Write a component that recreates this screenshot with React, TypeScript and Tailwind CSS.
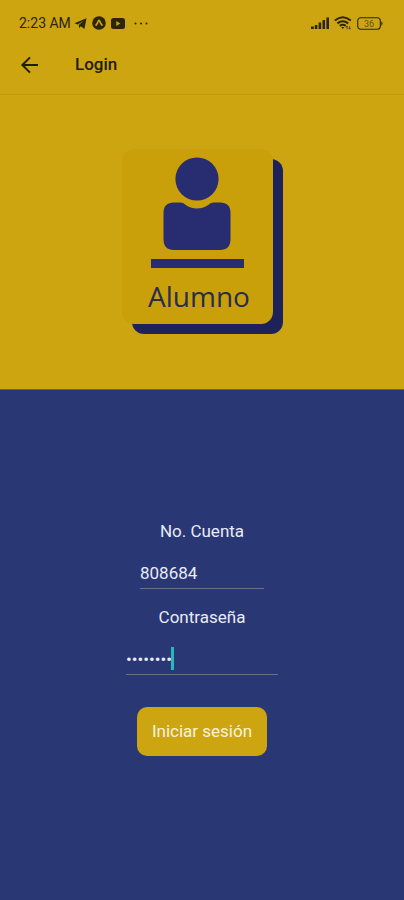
import { useState } from 'react';

function StatusBar() {
  return (
    <div className="flex h-9 items-end justify-between pr-5 pl-[19px] text-[#2b260a]">
      <div className="flex h-[26px] items-center gap-[5px]">
        <span className="text-sm">2:23 AM</span>
        <svg className="-ml-[2px] h-[13px] w-[13px]" viewBox="0 0 13 13" fill="currentColor" aria-hidden="true">
          <path d="M0.5 6.2 12.5 1.2 10.4 12 6.8 9.2 5.2 11.2 4.7 8 9.8 3.8 3.6 7.4Z" />
        </svg>
        <svg className="h-[14px] w-[14px]" viewBox="0 0 14 14" aria-hidden="true">
          <circle cx="7" cy="7" r="6.8" fill="currentColor" />
          <path d="M3.6 9.6Q5.6 7.4 6.2 5.2Q7 3.4 7.8 5.2Q8.4 7.4 10.4 9.6" fill="none" stroke="#cda510" strokeWidth="1.6" />
        </svg>
        <svg className="h-[11px] w-[14px]" viewBox="0 0 14 11" aria-hidden="true">
          <rect width="14" height="11" rx="2.5" fill="currentColor" />
          <path d="M5.3 3 9.3 5.5 5.3 8Z" fill="#cda510" />
        </svg>
        <svg className="ml-1 h-[3px] w-[14px]" viewBox="0 0 14 3" fill="currentColor" aria-hidden="true">
          <circle cx="1.5" cy="1.5" r="1" />
          <circle cx="7" cy="1.5" r="1" />
          <circle cx="12.5" cy="1.5" r="1" />
        </svg>
      </div>
      <div className="flex h-[26px] items-center gap-[5px]">
        <svg className="h-3 w-[18px]" viewBox="0 0 18 12" fill="currentColor" aria-hidden="true">
          <rect x="0" y="9.5" width="2.8" height="2.5" />
          <rect x="3.8" y="8" width="2.6" height="4" />
          <rect x="7.6" y="5.5" width="2.6" height="6.5" />
          <rect x="11.5" y="3" width="2.6" height="9" />
          <rect x="15.4" y="0.5" width="2.6" height="11.5" />
        </svg>
        <svg className="h-[14px] w-[18px]" viewBox="0 0 18 14" fill="none" stroke="currentColor" strokeWidth="2" aria-hidden="true">
          <path d="M0.8 4.6Q8.8 -2.2 16.8 4.6M3.4 7.4Q8.8 3 14.2 7.4M5.8 9.9Q8.8 7.6 11.8 9.9" />
          <path d="M7.2 10.9 8.8 13 10.4 10.9Z" fill="currentColor" stroke="none" />
          <path d="M13 10.2v3M15.6 13.2v-3M12.2 11.2 13 10.2 13.8 11.2M14.8 12.2 15.6 13.2 16.4 12.2" strokeWidth="0.7" />
        </svg>
        <svg className="h-[13px] w-[27px]" viewBox="0 0 27 13" aria-hidden="true">
          <rect x="0.7" y="0.7" width="22.6" height="11.6" rx="3" fill="none" stroke="currentColor" strokeWidth="1.1" />
          <path d="M24.3 4Q26.8 6.5 24.3 9Z" fill="currentColor" />
          <text x="12" y="9.8" textAnchor="middle" fontSize="9" fill="currentColor" opacity="0.65">36</text>
        </svg>
      </div>
    </div>
  );
}

function AlumnoCard() {
  return (
    <div className="mr-[10px] mb-[10px] flex w-[151px] flex-col items-center rounded-xl bg-[#caa00a] pt-2 pb-1 shadow-[10px_10px_0_#1d235a]">
      <svg className="h-[94px] w-[68px]" viewBox="0 0 68 94" fill="#272d70" aria-hidden="true">
        <circle cx="34" cy="22" r="21.6" />
        <path d="M11 45.5H17C19.5 45.5 20.5 46.2 22 47.4A20 20 0 0 0 46 47.4C47.5 46.2 48.5 45.5 51 45.5H57Q67.5 45.5 67.5 56V82Q67.5 93 57 93H11Q0.5 93 0.5 82V56Q0.5 45.5 11 45.5Z" />
      </svg>
      <div className="mt-2 h-[9px] w-[93px] bg-[#272d70]" />
      <p className="mt-2 pb-1 pl-1 font-['Open_Sans','Noto_Sans',sans-serif] text-[28px] leading-10 text-[#272d50]">
        Alumno
      </p>
    </div>
  );
}

export default function App() {
  const [account, setAccount] = useState('808684');
  const [password, setPassword] = useState('12345678');
  const [focused, setFocused] = useState(false);

  return (
    <div className="flex min-h-screen flex-col bg-[#293775] font-[Roboto,sans-serif]">
      <header className="border-b border-[#c49b0c] bg-[#cda510] shadow-[0_1px_2px_#c49b0c]">
        <StatusBar />
        <div className="flex h-[58px] items-center gap-9 pl-5 text-[#1f1c0c]">
          <button type="button" aria-label="Volver" className="flex">
            <svg className="h-[18px] w-[19px]" viewBox="0 0 19 18" fill="none" stroke="currentColor" strokeWidth="2" aria-hidden="true">
              <path d="M18 9H2.4M10 1.4 2.4 9 10 16.6" />
            </svg>
          </button>
          <h1 className="text-[17px] font-medium">Login</h1>
        </div>
      </header>

      <section className="flex justify-center border-b border-[#75692f] bg-[#cda510] pt-[54px] pb-[55px]">
        <AlumnoCard />
      </section>

      <form className="flex flex-1 flex-col items-center pt-[129px] text-[17px] text-[#e9ebf2]" onSubmit={(e) => e.preventDefault()}>
        <label htmlFor="account" className="leading-6">No. Cuenta</label>
        <input
          id="account"
          type="text"
          value={account}
          onChange={(e) => setAccount(e.target.value)}
          className="mt-[18px] h-7 w-[124px] border-b border-[#6d7088] pb-[3px] outline-none"
        />
        <label htmlFor="password" className="mt-4 leading-6">Contraseña</label>
        <div className="relative mt-[18px]">
          <input
            id="password"
            type="password"
            value={password}
            onChange={(e) => setPassword(e.target.value)}
            onFocus={() => setFocused(true)}
            onBlur={() => setFocused(false)}
            className="block h-7 w-[152px] border-b border-[#6d7088] pb-[3px] caret-[#27b8bd] outline-none"
          />
          {!focused && <span className="absolute top-0 left-[45px] h-[23px] w-[3px] bg-[#27b8bd]" />}
        </div>
        <button type="submit" className="mt-8 h-[49px] w-[130px] rounded-[10px] bg-[#cda510] text-[#faf3dc]">
          Iniciar sesión
        </button>
      </form>
    </div>
  );
}
